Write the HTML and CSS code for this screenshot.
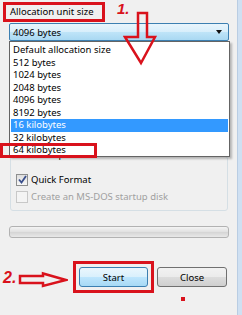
FILE: index.html
```html
<!DOCTYPE html>
<html>
<head>
<meta name="viewport" content="width=device-width, initial-scale=1">
<link rel="stylesheet" href="styles.css">
</head>
<body>

<div class="window">
  <div class="dialog">

    <div class="field-label">
      <span class="mark label-mark">Allocation unit size</span>
    </div>

    <div class="combo">
      <span>4096 bytes</span>
      <span class="combo-arrow"></span>
    </div>

    <div class="group">
      <span class="group-title">Format options</span>
      <label class="check-row">
        <span class="check checked">
          <svg width="9" height="9" viewBox="0 0 9 9"><path d="M1 4.5 L3.5 7.5 L8 1" fill="none" stroke="#3a4f8c" stroke-width="1.8"/></svg>
        </span>
        Quick Format
      </label>
      <label class="check-row disabled">
        <span class="check"></span>
        Create an MS-DOS startup disk
      </label>
    </div>

    <div class="progress"></div>

    <div class="buttons">
      <span class="mark button-mark"><button class="btn btn-default">Start</button></span>
      <button class="btn">Close</button>
    </div>

    <!-- dropdown list lies open over the dialog -->
    <ul class="dropdown">
      <li>Default allocation size</li>
      <li>512 bytes</li>
      <li>1024 bytes</li>
      <li>2048 bytes</li>
      <li>4096 bytes</li>
      <li>8192 bytes</li>
      <li class="selected">16 kilobytes</li>
      <li>32 kilobytes</li>
      <li>64 kilobytes</li>
    </ul>

    <!-- annotations -->
    <div class="mark item-mark"></div>
    <span class="step step-one">1.</span>
    <svg class="arrow arrow-down" width="35" height="56" viewBox="0 0 35 56">
      <polygon points="15,2 24,2 24,26 32,26 18,52 2,26 15,26" fill="none" stroke="#d9121c" stroke-width="2.5" stroke-linejoin="miter"/>
    </svg>
    <span class="step step-two">2.</span>
    <svg class="arrow arrow-right" width="50" height="17" viewBox="0 0 50 17">
      <polygon points="2,5 25,5 25,2.5 48,9 25,15 25,12 2,12" fill="none" stroke="#d9121c" stroke-width="2.5"/>
    </svg>
    <span class="dot"></span>

  </div>
  <div class="frame-edge"></div>
</div>

</body>
</html>
```

FILE: styles.css
```css
body {
  margin: 0;
  background: #f0f0f0;
  font-family: "Noto Sans", "DejaVu Sans", sans-serif;
  font-size: 9.5px;
  color: #000;
}

.window {
  display: flex;
  width: 242px;
  height: 315px;
  overflow: hidden;
}

.dialog {
  position: relative;
  flex: 1;
  padding: 0 8px 0 9px;
}

/* right window frame */
.frame-edge {
  width: 4px;
  background: #cfe0f2;
  border-left: 1px solid #b9cde3;
}

/* red annotation boxes */
.mark {
  border: 3px solid #d9121c;
}

.field-label {
  height: 22px;
  padding-top: 2px;
  box-sizing: border-box;
  margin-left: -6px;
}

.label-mark {
  display: inline-block;
  width: 102px;
  height: 20px;
  box-sizing: border-box;
  padding-left: 4px;
  line-height: 14px;
}

/* combo box (open state) */
.combo {
  display: flex;
  align-items: center;
  justify-content: space-between;
  height: 18px;
  margin-top: 1px;
  padding: 0 6px 0 3px;
  box-sizing: border-box;
  border: 1px solid #3c7fb1;
  border-radius: 2px;
  background: linear-gradient(#e9f5fc, #d7eefb 50%, #bfe4f8 50%, #a9d8f2);
}

.combo-arrow {
  width: 0;
  height: 0;
  border-left: 3px solid transparent;
  border-right: 3px solid transparent;
  border-top: 4px solid #111;
}

/* group box */
.group {
  position: relative;
  margin: 115px 1px 0 1px;
  height: 55px;
  box-sizing: border-box;
  border: 1px solid #d5dfe5;
  border-radius: 3px;
  padding: 16px 0 0 5px;
}

.group-title {
  position: absolute;
  top: -9px;
  left: 5px;
  padding: 0 2px;
  background: #f0f0f0;
}

.check-row {
  display: flex;
  align-items: center;
  gap: 3px;
  height: 13px;
  margin-bottom: 4px;
}

.check {
  display: flex;
  align-items: center;
  justify-content: center;
  width: 12px;
  height: 12px;
  box-sizing: border-box;
  border: 1px solid #8e8f8f;
  background: linear-gradient(#dedede, #f8f8f8);
}

.disabled {
  color: #a0a0a0;
}

.disabled .check {
  border-color: #c8c8c8;
  background: #f4f4f4;
}

/* progress bar */
.progress {
  height: 12px;
  margin-top: 15px;
  box-sizing: border-box;
  border: 1px solid #b2b2b2;
  border-radius: 3px;
  background: linear-gradient(#f4f4f4, #e2e2e2 45%, #d6d6d6 55%, #e8e8e8);
}

/* buttons */
.buttons {
  display: flex;
  justify-content: flex-end;
  align-items: center;
  gap: 3px;
  margin-top: 23px;
  margin-right: 2px;
}

.button-mark {
  display: flex;
  align-items: center;
  justify-content: center;
  width: 81px;
  height: 32px;
  box-sizing: border-box;
}

.btn {
  width: 70px;
  height: 20px;
  padding: 0;
  font: inherit;
  color: #000;
  border: 1px solid #707070;
  border-radius: 3px;
  background: linear-gradient(#f2f2f2, #ebebeb 50%, #dddddd 50%, #cfcfcf);
}

.btn-default {
  width: 69px;
  border-color: #3c7fb1;
  background: linear-gradient(#eaf6fd, #d9f0fc 50%, #bee6fd 50%, #a7d9f5);
}

/* open dropdown list */
.dropdown {
  position: absolute;
  top: 41px;
  left: 9px;
  width: 221px;
  height: 116px;
  box-sizing: border-box;
  margin: 0;
  padding: 2px 1px;
  list-style: none;
  background: #fff;
  border: 1px solid #646464;
  box-shadow: 2px 2px 2px rgba(0, 0, 0, 0.25);
}

.dropdown li {
  height: 12.5px;
  line-height: 12.5px;
  padding-left: 2px;
}

.dropdown .selected {
  background: #3399ff;
  color: #fff;
}

.item-mark {
  position: absolute;
  top: 143px;
  left: 0;
  width: 97px;
  height: 15px;
  box-sizing: border-box;
}

.step {
  position: absolute;
  color: #d9121c;
  font-family: "Liberation Sans", sans-serif;
  font-weight: bold;
  font-style: italic;
}

.step-one {
  top: 0;
  left: 117px;
  font-size: 15px;
}

.step-two {
  top: 269px;
  left: 3px;
  font-size: 16px;
}

.arrow {
  position: absolute;
}

.arrow-down {
  top: 11px;
  left: 123px;
}

.arrow-right {
  top: 271px;
  left: 18px;
}

.dot {
  position: absolute;
  top: 297px;
  left: 181px;
  width: 4px;
  height: 4px;
  background: #d9121c;
}
```
